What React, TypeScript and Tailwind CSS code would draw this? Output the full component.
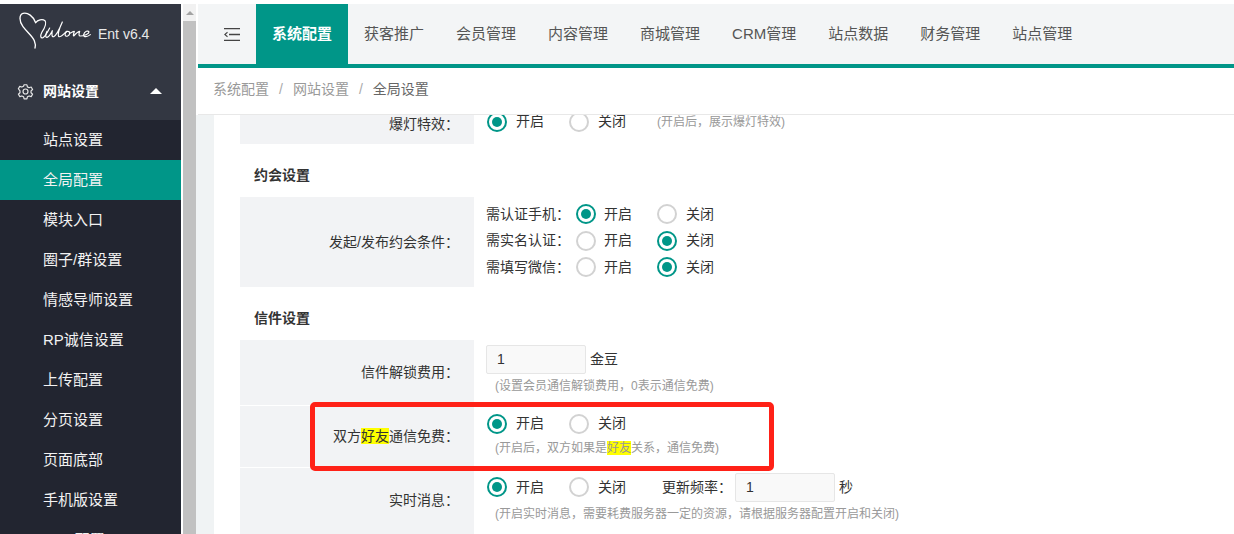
import React from "react";

const FONT = "font-['Liberation_Sans','Noto_Sans_CJK_SC',sans-serif]";

const menu = ["站点设置", "全局配置", "模块入口", "圈子/群设置", "情感导师设置", "RP诚信设置", "上传配置", "分页设置", "页面底部", "手机版设置", "SEO配置"];
const tabs = ["系统配置", "获客推广", "会员管理", "内容管理", "商城管理", "CRM管理", "站点数据", "财务管理", "站点管理"];

function Radio({ on, label, w, gap = "gap-[9px]" }: { on?: boolean; label: string; w: string; gap?: string }) {
  return (
    <span className={`inline-flex items-center whitespace-nowrap ${gap} ${w}`}>
      <span className={`w-[20px] h-[20px] rounded-full border-2 flex items-center justify-center shrink-0 ${on ? "border-[#009688]" : "border-[#d2d2d2]"}`}>
        {on && <span className="w-[10px] h-[10px] rounded-full bg-[#009688]" />}
      </span>
      <span>{label}</span>
    </span>
  );
}

function Onoff({ on = true }: { on?: boolean }) {
  return (
    <>
      <Radio on={on} label="开启" w="w-[82px] ml-[1px]" />
      <Radio on={!on} label="关闭" w="w-[58px]" />
    </>
  );
}

function Sub({ label, on }: { label: string; on: boolean }) {
  return (
    <div className="flex items-center h-[26.5px]">
      <span className="w-[90px] whitespace-nowrap">{label}</span>
      <Radio on={on} label="开启" w="w-[81px]" gap="gap-[8px]" />
      <Radio on={!on} label="关闭" w="w-[58px]" />
    </div>
  );
}

function Row({ label, h, children, border, labelClass = "" }: { label: React.ReactNode; h: string; children: React.ReactNode; border?: boolean; labelClass?: string }) {
  return (
    <div className={`flex ${h} ${border ? "border-b border-white" : ""}`}>
      <div className={`w-[234px] shrink-0 bg-[#f2f3f5] flex items-center justify-end pr-[15px] text-[#333] ${labelClass}`}>{label}</div>
      <div className="pl-[12px] flex-1 min-w-0">{children}</div>
    </div>
  );
}

const Mark = ({ children }: { children: React.ReactNode }) => <span className="bg-[#ffff00]">{children}</span>;

function Input({ className = "" }: { className?: string }) {
  return <span className={`w-[100px] h-[29px] shrink-0 border border-[#e6e6e6] rounded-[2px] bg-[#f9f9f9] flex items-center pl-[10px] text-[#333] ${className}`}>1</span>;
}

function Heading({ children }: { children: React.ReactNode }) {
  return <div className="h-[53px] flex items-center pl-[14px] pt-[9px] font-bold text-[14px] text-[#333]">{children}</div>;
}

export default function App() {
  return (
    <div className={`h-[534px] w-[1234px] overflow-hidden bg-white pt-[4px] flex text-[14px] text-[#333] ${FONT}`}>
      <aside className="w-[181px] shrink-0 bg-[#222530] flex flex-col overflow-hidden">
        <div className="bg-[#333742] h-[116px] shrink-0 flex flex-col">
          <div className="h-[60px] flex items-start pl-[15px] pt-[4px] text-white">
            <svg width="90" height="45" viewBox="0 0 270 135" fill="none" stroke="#fff" strokeLinecap="round" strokeLinejoin="round" className="shrink-0">
              <path d="M62 44 C55 25 38 12 24 16 C12 20 12 40 24 56 C36 72 52 84 58 98 C62 108 62 114 60 120" strokeWidth="4" />
              <path d="M62 44 C68 36 82 32 90 38 C96 46 88 62 80 74 C76 82 76 90 82 90 C90 88 98 72 104 60" strokeWidth="3.500" />
              <path d="M96 70 C92 80 90 88 96 88 C102 86 108 76 112 68 C110 78 110 88 116 86 C124 82 134 62 142 42 C134 58 126 82 132 86 C140 88 150 72 156 70" strokeWidth="3.500" />
              <path d="M156 70 C148 74 148 88 158 84 C166 80 166 70 158 70 M164 76 C172 74 176 68 178 70 C176 76 174 84 176 84 C182 78 188 70 194 70 C192 76 190 84 196 84 C206 84 222 78 222 72 C220 66 208 70 206 80 C206 88 216 88 226 80" strokeWidth="3.500" />
            </svg>
            <span className="ml-[-7px] mt-[16px] text-[14px] text-[#e8e8e8] whitespace-nowrap">Ent v6.4</span>
          </div>
          <div className="flex items-center flex-1 pl-[17px] pr-[19px] pb-[2px] text-white">
            <svg width="17" height="17" viewBox="0 0 24 24" fill="none" stroke="#e5e5e5" strokeWidth="1.700" strokeLinejoin="round">
              <path d="M10 2.500h4l.7 3 2.400 1.200 2.900-1 2 3.400-2.200 2.100v2.600l2.200 2.100-2 3.400-2.900-1-2.400 1.200-.7 3h-4l-.7-3-2.400-1.200-2.900 1-2-3.400 2.200-2.100v-2.600L1.900 8.100l2-3.400 2.900 1 2.400-1.200z" />
              <circle cx="12" cy="12" r="3.500" />
            </svg>
            <span className="ml-[9px] font-bold text-[14px] flex-1">网站设置</span>
            <span className="w-0 h-0 border-x-[6px] border-x-transparent border-b-[6px] border-b-white" />
          </div>
        </div>
        {menu.map((m, i) => (
          <div key={m} className={`h-[40px] shrink-0 flex items-center pl-[43px] text-[15px] whitespace-nowrap ${i === 1 ? "bg-[#009688]" : ""} text-[#f2f2f2]`}>{m}</div>
        ))}
      </aside>
      <div className="w-[13px] ml-[2px] shrink-0 bg-[#f1f1f1] flex flex-col">
        <div className="h-[17px] flex items-center justify-center">
          <span className="w-0 h-0 border-x-[4px] border-x-transparent border-b-[4px] border-b-[#a3a3a3]" />
        </div>
        <div className="flex-1 bg-[#c1c1c1]" />
      </div>
      <main className="flex-1 min-w-0 flex flex-col overflow-hidden">
        <nav className="h-[64px] ml-[2px] shrink-0 bg-[#f3f5f6] border-b-4 border-[#009688] flex text-[15px]">
          <div className="w-[58px] flex items-center pl-[26px]">
            <svg width="16" height="13" viewBox="0 0 16 13" fill="none" stroke="#444" strokeWidth="1.300">
              <path d="M0 .700h16M5 6.500h11M0 12.300h16" />
              <path d="M3.500 4.300 .800 6.500l2.700 2.200" strokeWidth="1.100" />
            </svg>
          </div>
          {tabs.map((t, i) => (
            <div key={t} className={`px-[16px] flex items-center justify-center ${i === 0 ? "bg-[#009688] text-white font-bold" : "text-[#555]"}`}>{t}</div>
          ))}
        </nav>
        <div className="h-[47px] ml-[2px] shrink-0 bg-white border-b border-[#e8e8e8] flex items-center pl-[15px] pb-[3px] text-[14px] text-[#999] relative">
          <span>系统配置</span>
          <span className="mx-[10px] text-[#aaa]">/</span>
          <span>网站设置</span>
          <span className="mx-[10px] text-[#aaa]">/</span>
          <span className="text-[#666]">全局设置</span>
        </div>
        <div className="flex-1 bg-[#f0f3f4] pl-[18px] overflow-hidden min-h-0">
          <div className="bg-white h-full pl-[26px]">
            <Row label="爆灯特效：" h="h-[29px]" labelClass="pb-[10px]">
              <div className="flex items-center h-[13px]">
                <Onoff />
                <span className="ml-[30px] text-[12px] text-[#999] whitespace-nowrap">(开启后，展示爆灯特效)</span>
              </div>
            </Row>
            <Heading>约会设置</Heading>
            <Row label="发起/发布约会条件：" h="h-[90px]">
              <div className="pt-[4px]">
                <Sub label="需认证手机：" on />
                <Sub label="需实名认证：" on={false} />
                <Sub label="需填写微信：" on={false} />
              </div>
            </Row>
            <Heading>信件设置</Heading>
            <Row label="信件解锁费用：" h="h-[66px]" border>
              <div className="pt-[5px] flex items-center gap-[4px]"><Input /><span>金豆</span></div>
              <div className="text-[12px] text-[#999] pl-[9px] mt-[3px]">(设置会员通信解锁费用，0表示通信免费)</div>
            </Row>
            <Row label={<span>双方<Mark>好友</Mark>通信免费：</span>} h="h-[62px]" border>
              <div className="flex items-center pt-[7px]"><Onoff /></div>
              <div className="text-[12px] text-[#999] pl-[9px] mt-[5px]">(开启后，双方如果是<Mark>好友</Mark>关系，通信免费)</div>
            </Row>
            <Row label="实时消息：" h="h-[66px]" labelClass="pb-[2px]">
              <div className="flex items-center pt-[4px]">
                <Onoff />
                <span className="ml-[35px] w-[73px] whitespace-nowrap">更新频率：</span>
                <Input className="mt-[1px]" />
                <span className="ml-[4px]">秒</span>
              </div>
              <div className="text-[12px] text-[#999] pl-[9px] mt-[3px]">(开启实时消息，需要耗费服务器一定的资源，请根据服务器配置开启和关闭)</div>
            </Row>
          </div>
        </div>
      </main>
      <div className="absolute left-[310px] top-[402px] w-[464px] h-[69px] border-[5px] border-[#ff2117] rounded-[5px] pointer-events-none" />
    </div>
  );
}
